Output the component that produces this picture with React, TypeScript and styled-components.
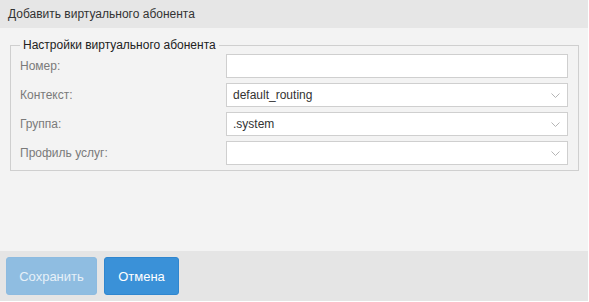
import React from "react";
import styled, { createGlobalStyle } from "styled-components";

const GlobalStyle = createGlobalStyle`
  body {
    margin: 0;
    background: #fff;
    font-family: "Liberation Sans", Arial, sans-serif;
  }
`;

const Dialog = styled.div`
  width: 588px;
  height: 301px;
  display: flex;
  flex-direction: column;
  background: #f3f3f3;
`;

const Header = styled.div`
  height: 28px;
  line-height: 28px;
  padding-left: 8px;
  background: #e6e6e6;
  color: #333;
  font-size: 12px;
`;

const Body = styled.div`
  flex: 1;
  padding: 10px 9px 0 10px;
`;

const Fieldset = styled.fieldset`
  margin: 0;
  padding: 2px 10px 5px 9px;
  border: 1px solid #cfcfcf;
  display: grid;
  grid-template-columns: 206px 1fr;
  row-gap: 5px;
  align-items: center;
`;

const Legend = styled.legend`
  padding: 0 3px;
  font-size: 12px;
  line-height: 14px;
  color: #222;
`;

const Label = styled.label`
  font-size: 12px;
  color: #7a7a7a;
`;

const Field = styled.div`
  position: relative;
  height: 24px;
  box-sizing: border-box;
  border: 1px solid #cfcfcf;
  background: #fff;
  padding-left: 6px;
  font-size: 12px;
  line-height: 22px;
  color: #333;
`;

const Chevron = styled.svg`
  position: absolute;
  right: 7px;
  top: 9px;
`;

const Footer = styled.div`
  height: 50px;
  box-sizing: border-box;
  padding: 6px;
  display: flex;
  gap: 7px;
  background: #e5e5e5;
`;

const Button = styled.button<{ $disabled?: boolean; $width: number }>`
  width: ${(p) => p.$width}px;
  height: 38px;
  padding: 0;
  border: 1px solid ${(p) => (p.$disabled ? "#8dbbe0" : "#2f86cf")};
  border-radius: 3px;
  background: ${(p) => (p.$disabled ? "#8fbde1" : "#3a91d8")};
  color: ${(p) => (p.$disabled ? "#e6f0f8" : "#fff")};
  font-family: inherit;
  font-size: 13px;
`;

const Select = ({ value }: { value?: string }) => (
  <Field>
    {value}
    <Chevron width="9" height="5" viewBox="0 0 9 5">
      <path d="M0.5 0.5 L4.5 4.5 L8.5 0.5" fill="none" stroke="#b5b5b5" strokeWidth="1" />
    </Chevron>
  </Field>
);

const App = () => {
  return (
    <>
      <GlobalStyle />
      <Dialog>
        <Header>Добавить виртуального абонента</Header>
        <Body>
          <Fieldset>
            <Legend>Настройки виртуального абонента</Legend>
            <Label>Номер:</Label>
            <Field />
            <Label>Контекст:</Label>
            <Select value="default_routing" />
            <Label>Группа:</Label>
            <Select value=".system" />
            <Label>Профиль услуг:</Label>
            <Select />
          </Fieldset>
        </Body>
        <Footer>
          <Button $disabled $width={91}>
            Сохранить
          </Button>
          <Button $width={75}>Отмена</Button>
        </Footer>
      </Dialog>
    </>
  );
};

export default App;
